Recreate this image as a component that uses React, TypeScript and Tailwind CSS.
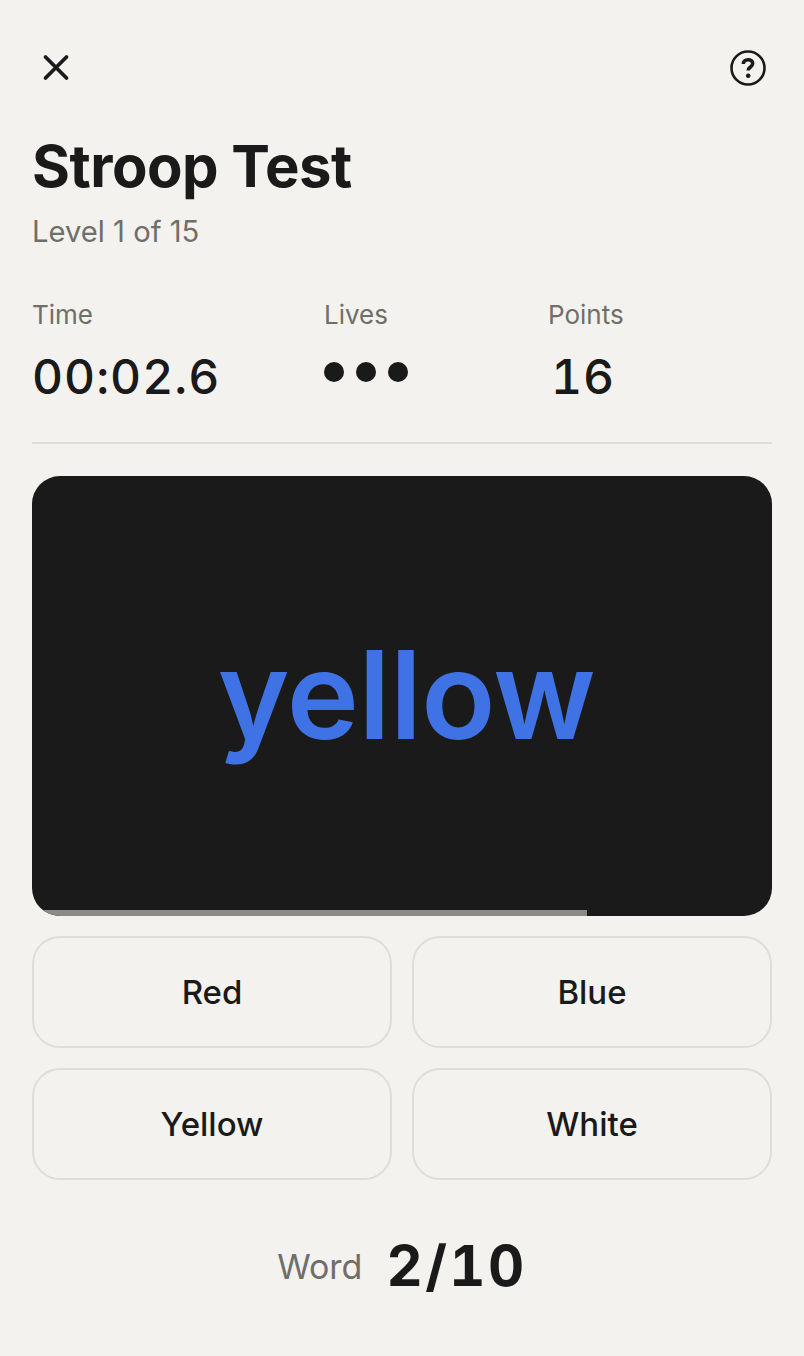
const answers = ["Red", "Blue", "Yellow", "White"]

const stats = [
  { label: "Time", value: "00:02.6", width: "w-[292px]", valueClass: "" },
  { label: "Lives", value: null, width: "w-[224px]", valueClass: "" },
  { label: "Points", value: "16", width: "w-[224px]", valueClass: "pl-[3px]" },
]

function Lives() {
  return (
    <div className="flex h-[54px] gap-3 pt-[12px]">
      <span className="size-5 rounded-full bg-[#1a1a1a]" />
      <span className="size-5 rounded-full bg-[#1a1a1a]" />
      <span className="size-5 rounded-full bg-[#1a1a1a]" />
    </div>
  )
}

export default function App() {
  return (
    <div className="h-[1356px] w-[804px] bg-[#f3f2ee] px-8 font-['Inter',sans-serif] text-[#1a1a1a]">
      <div className="flex items-center justify-between pt-[48px]">
        <svg width="40" height="40" viewBox="0 0 40 40" fill="none" stroke="currentColor" strokeWidth="3.8" strokeLinecap="round" className="ml-1">
          <path d="M9.500 9 30.500 30M30.500 9 9.500 30" />
        </svg>
        <svg width="40" height="40" viewBox="0 0 40 40" fill="none" stroke="currentColor" className="mr-1">
          <circle cx="20" cy="20" r="16.500" strokeWidth="2.600" />
          <path d="M15.300 16c0-2.700 2-4.300 4.700-4.300 2.700 0 4.700 1.500 4.700 3.900 0 3.400-4.500 3.400-4.500 6.900" strokeWidth="3.600" />
          <circle cx="20.200" cy="27.800" r="2.300" fill="currentColor" stroke="none" />
        </svg>
      </div>

      <h1 className="mt-[42px] text-[58px] leading-[72px] font-bold tracking-[-0.5px]">Stroop Test</h1>
      <p className="mt-[10px] text-[29.200px] leading-[40px] text-[#6f6e69]">Level 1 of 15</p>

      <div className="mt-[45px] flex border-b-2 border-[#dfddd8] pb-[38px]">
        {stats.map((stat) => (
          <div key={stat.label} className={stat.width}>
            <div className="text-[26px] leading-[36px] text-[#6f6e69]">{stat.label}</div>
            {stat.value ? (
              <div className={`mt-[17px] text-[48px] leading-[54px] font-medium tracking-[1px] tabular-nums ${stat.valueClass}`}>{stat.value}</div>
            ) : (
              <div className="mt-[17px]"><Lives /></div>
            )}
          </div>
        ))}
      </div>

      <div className="relative mt-[32px] flex h-[440px] items-center justify-center overflow-hidden rounded-[28px] bg-[#1a1a1a]">
        <span className="pb-[2px] pl-[9px] text-[122px] leading-none font-semibold tracking-[-0.500px] text-[#3f72e5]">yellow</span>
        <div className="absolute bottom-0 left-0 h-[6px] w-[75%] bg-[#8c8b86]" />
      </div>

      <div className="mt-[20px] grid grid-cols-2 gap-5">
        {answers.map((answer) => (
          <button key={answer} className="h-[112px] rounded-[28px] border-2 border-[#dfddd8] pt-[2px] text-[33px] font-medium">
            {answer}
          </button>
        ))}
      </div>

      <div className="mt-[48px] flex items-center justify-center gap-6">
        <span className="text-[34px] text-[#6f6e69]">Word</span>
        <span className="text-[56px] leading-[76px] font-bold tracking-[2.500px] tabular-nums">2/10</span>
      </div>
    </div>
  )
}
